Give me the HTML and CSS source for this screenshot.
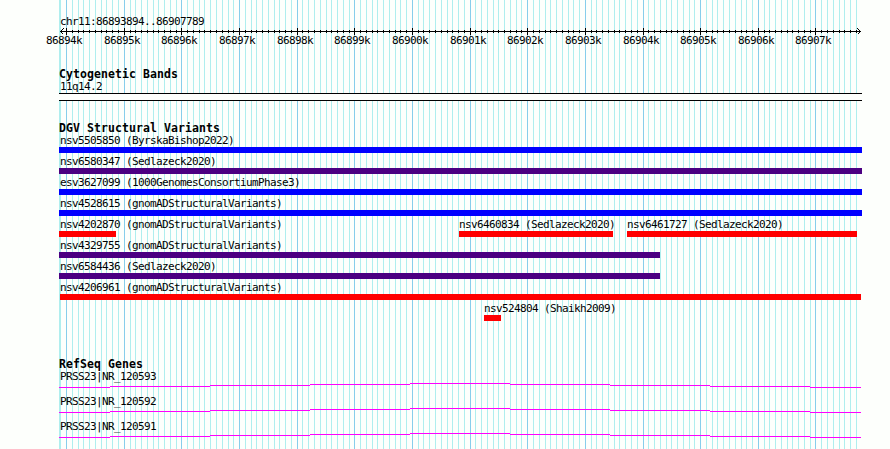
FILE: index.html
```
<!DOCTYPE html>
<html lang="en"><head><meta charset="utf-8"><title>chr11:86893894..86907789</title><link rel="stylesheet" href="styles.css"></head>
<body>
<main class="browser">
<svg class="grid" id="grid" width="890" height="449" shape-rendering="crispEdges" aria-hidden="true"></svg>
<header class="ruler">
<div class="range">chr11:86893894..86907789</div>
<svg class="axis" id="axis" width="803" height="7" shape-rendering="crispEdges"></svg>
<div class="ticks" id="ticks"></div>
</header>
<section class="bands">
<h2>Cytogenetic Bands</h2>
<div class="label">11q14.2</div>
<div class="band"></div>
</section>
<section class="variants">
<h2>DGV Structural Variants</h2>
<div id="variants"></div>
</section>
<section class="genes">
<h2>RefSeq Genes</h2>
<div id="genes"></div>
</section>
</main>
<script src="main.js"></script>
</body></html>
```
FILE: styles.css
```
body { margin: 0; background: #fdfffc; color: #000; }
.browser { position: relative; width: 890px; height: 449px; box-sizing: border-box; padding: 15px 28px 0 59px; overflow: hidden; font: 11px/12px "DejaVu Sans Mono", monospace; letter-spacing: -0.622px; display: flex; flex-direction: column; }
.grid { position: absolute; left: 0; top: 0; }
.ruler, section { position: relative; width: 803px; flex: none; }
.ruler { height: 53px; }
.range { height: 13px; line-height: 14px; padding-left: 1px; }
.axis { display: block; }
.ticks { position: relative; height: 12px; }
.ticks span { position: absolute; top: 0; }
h2 { margin: 0; height: 12px; font: bold 11.5px/12px "DejaVu Sans Mono", monospace; letter-spacing: 0.077px; white-space: nowrap; }
.label { height: 12px; line-height: 14px; padding-left: 1px; white-space: nowrap; }
.bands { height: 54px; }
.band { height: 6px; margin-top: 1px; border: solid #000; border-width: 1px 0; background: #fdfffc; }
.variants { height: 236px; }
.row { display: flex; height: 21px; }
.item { flex: none; width: 0; }
.bar { height: 6px; margin-top: 1px; }
.blue { background: #00f; }
.purple { background: #4b0082; }
.red { background: #f00; }
.gene { height: 25px; }
.intron { display: block; }
```
FILE: main.js
```
const px = bp => Math.round(60 + (bp - 86893894) / 13896 * 801);
let lines = '<path d="M59.5 0V449" stroke="#afeeee"/>', ticks = '', labels = '';
for (let bp = 86893900; bp <= 86907789; bp += 100) {
  const x = px(bp), major = bp % 1000 === 0;
  lines += `<path d="M${x + .5} 0V449" stroke="${major ? '#87ceeb' : '#afeeee'}"/>`;
  if (x > 60) ticks += `<path d="M${x - 58.5} ${major ? '0V7' : '2V5'}"/>`;
  if (major) labels += `<span style="left:${x - 79}px">${bp / 1000}k</span>`;
}
document.getElementById('grid').innerHTML = lines;
document.getElementById('axis').innerHTML = `<g stroke="#000" fill="none">${ticks}<path d="M1 3.5H802M1.5 3.5l3-3M1.5 3.5l3 3M801.5 3.5l-3-3M801.5 3.5l-3 3"/></g>`;
document.getElementById('ticks').innerHTML = labels;
const rows = [
  [['nsv5505850 (ByrskaBishop2022)', 0, 803, 'blue']],
  [['nsv6580347 (Sedlazeck2020)', 0, 803, 'purple']],
  [['esv3627099 (1000GenomesConsortiumPhase3)', 0, 803, 'blue']],
  [['nsv4528615 (gnomADStructuralVariants)', 0, 803, 'blue']],
  [['nsv4202870 (gnomADStructuralVariants)', 0, 57, 'red'], ['nsv6460834 (Sedlazeck2020)', 400, 154, 'red'], ['nsv6461727 (Sedlazeck2020)', 568, 230, 'red']],
  [['nsv4329755 (gnomADStructuralVariants)', 0, 601, 'purple']],
  [['nsv6584436 (Sedlazeck2020)', 0, 601, 'purple']],
  [['nsv4206961 (gnomADStructuralVariants)', 1, 801, 'red']],
  [['nsv524804 (Shaikh2009)', 425, 17, 'red']]
];
document.getElementById('variants').innerHTML = rows.map(r => `<div class="row">${r.map(([t, x, w, c], i) =>
  `<div class="item" style="margin-left:${x - (i ? r[i - 1][1] : 0)}px"><div class="label"${x ? ' style="padding:0"' : ''}>${t}</div><div class="bar ${c}" style="width:${w}px"></div></div>`).join('')}</div>`).join('');
document.getElementById('genes').innerHTML = ['593', '592', '591'].map(n => `<div class="gene"><div class="label">PRSS23|NR_120${n}</div><svg class="intron" width="803" height="6" shape-rendering="crispEdges"><path stroke="#f0f" d="M0 5.5H51M51 4.5H151M151 3.5H251M251 2.5H351M351 1.5H451M451 2.5H551M551 3.5H651M651 4.5H751M751 5.5H802"/></svg></div>`).join('');
```
